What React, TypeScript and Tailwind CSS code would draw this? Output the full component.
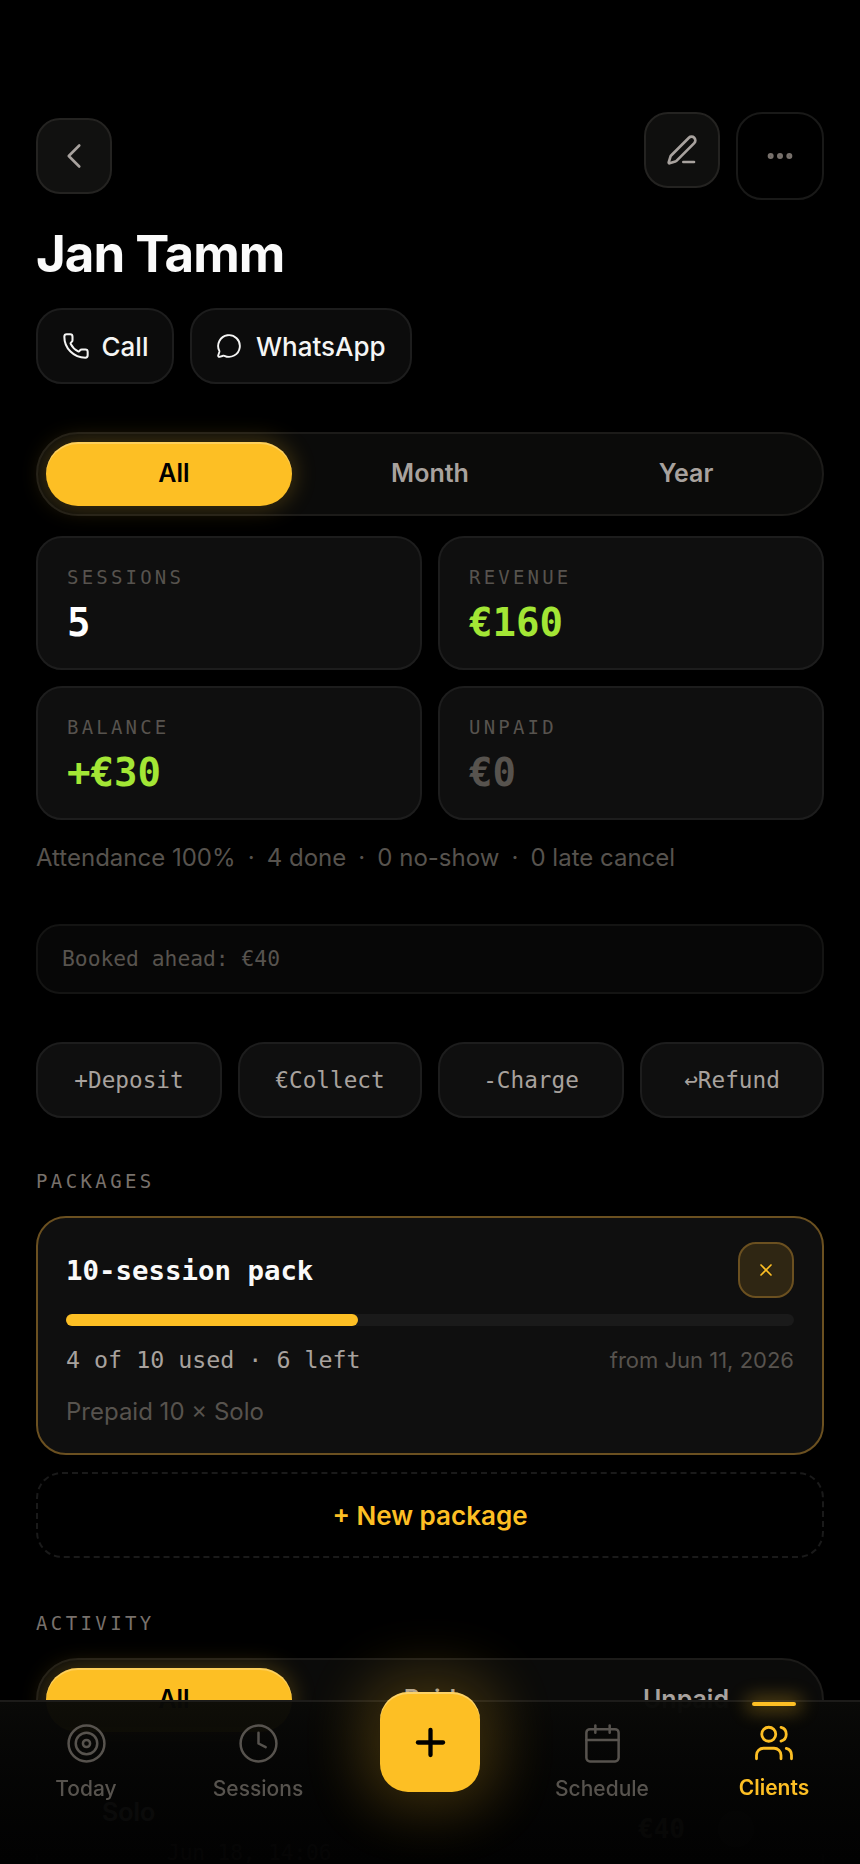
import { Calendar, ChevronLeft, Clock, Ellipsis, MessageCircle, PenLine, Phone, Plus, Target, Users, X } from 'lucide-react';

const mono = "font-['DejaVu_Sans_Mono',monospace]";

function Segments({ items }: { items: string[] }) {
  return (
    <div className="grid grid-cols-3 h-[84px] p-[8px] rounded-[42px] border-2 border-[#1c1b19] bg-[#0b0b0a]">
      {items.map((item, i) => (
        <div
          key={item}
          className={
            i === 0
              ? 'flex items-center justify-center rounded-[32px] mr-[10px] pl-[10px] bg-[#fdbf24] text-black text-[25px] font-semibold shadow-[0_0_24px_rgba(253,191,36,0.28),inset_0_2px_0_rgba(255,255,255,0.25)]'
              : 'flex items-center justify-center text-[#a8a29e] text-[25px] font-semibold'
          }
        >
          {item}
        </div>
      ))}
    </div>
  );
}

function Stat({ label, value, color }: { label: string; value: string; color: string }) {
  return (
    <div className="h-[134px] rounded-[26px] border-2 border-[#1d1d1d] bg-[#0f0f0f] px-[29px] pt-[26px]">
      <div className={`${mono} text-[19px] leading-[26px] tracking-[3.2px] text-[#57534e]`}>{label}</div>
      <div className={`${mono} ${color} text-[39px] leading-[48px] font-bold mt-[9px]`}>{value}</div>
    </div>
  );
}

function ActionButton({ label }: { label: string }) {
  return (
    <div className={`${mono} flex items-center justify-center h-[76px] rounded-[26px] border-2 border-[#1d1d1d] bg-[#0f0f0f] text-[22.7px] text-[#a8a29e]`}>
      {label}
    </div>
  );
}

function NavItem({ icon, label, active }: { icon: React.ReactNode; label: string; active?: boolean }) {
  return (
    <div className={`relative flex flex-col items-center pt-[20px] ${active ? 'text-[#fdbf24]' : 'text-[#57534e]'}`}>
      {active && <div className="absolute top-0 w-[44px] h-[4px] rounded-full bg-[#fdbf24] shadow-[0_0_18px_6px_rgba(253,191,36,0.3)]" />}
      {icon}
      <div className={`text-[21px] leading-[26px] mt-[11px] ${active ? 'font-semibold' : 'font-medium'}`}>{label}</div>
    </div>
  );
}

const attendance = ['Attendance 100%', '4 done', '0 no-show', '0 late cancel'];

export default function App() {
  return (
    <div className="relative h-[1864px] overflow-hidden bg-black font-['Inter',sans-serif]">
      <div className="px-[36px] pt-[112px]">
        <div className="flex items-start justify-between">
          <div className="mt-[6px] flex items-center justify-center w-[76px] h-[76px] rounded-[24px] border-2 border-[#242321] bg-[#111110] text-[#a8a29e]">
            <ChevronLeft size={42} strokeWidth={1.5} />
          </div>
          <div className="flex gap-[16px]">
            <div className="flex items-center justify-center w-[76px] h-[76px] rounded-[24px] border-2 border-[#242321] bg-[#0f0f0e] text-[#a8a29e]">
              <PenLine size={32} strokeWidth={2} />
            </div>
            <div className="flex items-center justify-center w-[88px] h-[88px] rounded-[26px] border-2 border-[#191918] bg-black text-[#78716c]">
              <Ellipsis size={32} strokeWidth={2.5} />
            </div>
          </div>
        </div>

        <h1 className="mt-[23px] text-[51px] leading-[62px] font-bold tracking-[-1px] text-[#fafafa]">Jan Tamm</h1>

        <div className="flex gap-[16px] mt-[23px]">
          <div className="flex items-center gap-[12px] h-[76px] px-[23.5px] rounded-[26px] border-2 border-[#1d1d1d] bg-[#0c0c0c] text-[26px] text-[#f5f5f4] font-medium">
            <Phone size={28} strokeWidth={1.75} />
            Call
          </div>
          <div className="flex items-center gap-[14px] h-[76px] px-[24px] rounded-[26px] border-2 border-[#1d1d1d] bg-[#0c0c0c] text-[26px] text-[#f5f5f4] font-medium">
            <MessageCircle size={26} strokeWidth={1.75} />
            WhatsApp
          </div>
        </div>

        <div className="mt-[48px]">
          <Segments items={['All', 'Month', 'Year']} />
        </div>

        <div className="grid grid-cols-2 gap-x-[16px] gap-y-[16px] mt-[20px]">
          <Stat label="SESSIONS" value="5" color="text-white" />
          <Stat label="REVENUE" value="€160" color="text-[#a3e635]" />
          <Stat label="BALANCE" value="+€30" color="text-[#a3e635]" />
          <Stat label="UNPAID" value="€0" color="text-[#57534e]" />
        </div>

        <div className="mt-[22px] text-[24px] leading-[32px] text-[#57534e] whitespace-pre">
          {attendance.map((part, i) => (
            <span key={part}>
              {i > 0 && <span className="mx-[-1.4px]">  ·  </span>}
              {part}
            </span>
          ))}
        </div>

        <div className={`${mono} flex items-center mt-[50px] h-[70px] px-[24px] rounded-[24px] border-2 border-[#141413] bg-[#070707] text-[21.3px] text-[#57534e]`}>
          Booked ahead: €40
        </div>

        <div className="grid grid-cols-[186px_184px_186px_184px] gap-[16px] mt-[48px]">
          <ActionButton label="+Deposit" />
          <ActionButton label="€Collect" />
          <ActionButton label="-Charge" />
          <ActionButton label="↩Refund" />
        </div>

        <div className={`${mono} mt-[50px] text-[19px] leading-[26px] tracking-[3.4px] text-[#78716c]`}>PACKAGES</div>

        <div className="mt-[22px] h-[239px] rounded-[30px] border-2 border-[#6b5020] bg-[#0f0f0f] px-[28px] pt-[24px]">
          <div className="flex items-center justify-between">
            <div className={`${mono} pt-[2px] text-[27.4px] font-semibold text-[#fafafa]`}>10-session pack</div>
            <div className="flex items-center justify-center w-[56px] h-[56px] rounded-[18px] border-2 border-[#6b5020] bg-[#2f2613] text-[#fdbf24]">
              <X size={20} strokeWidth={2} />
            </div>
          </div>
          <div className="h-[12px] mt-[16px] rounded-full bg-[#1a1a1a]">
            <div className="h-full w-[292px] rounded-full bg-[#fdbf24]" />
          </div>
          <div className="flex items-center justify-between mt-[19px]">
            <div className={`${mono} text-[23.3px] leading-[30px] text-[#a8a29e]`}>4 of 10 used · 6 left</div>
            <div className="text-[22px] leading-[30px] text-[#57534e]">from Jun 11, 2026</div>
          </div>
          <div className="mt-[22px] text-[24px] leading-[30px] text-[#57534e]">Prepaid 10 × Solo</div>
        </div>

        <div className="flex items-center justify-center mt-[17px] h-[86px] rounded-[26px] border-2 border-dashed border-[#1a1a1a] text-[26px] font-semibold text-[#fdbf24]">
          + New package
        </div>

        <div className={`${mono} mt-[52px] text-[19px] leading-[26px] tracking-[3.4px] text-[#78716c]`}>ACTIVITY</div>

        <div className="mt-[22px]">
          <Segments items={['All', 'Paid', 'Unpaid']} />
        </div>

        <div className="relative mt-[15px] h-[134px] rounded-[26px] border-2 border-[#1d1d1d] bg-[#0f0f0f] px-[64px] pt-[37px]">
          <div className="text-[25px] leading-[32px] font-semibold text-[#fafafa]">Solo</div>
          <div className={`${mono} mt-[12px] ml-[65px] text-[21px] leading-[27px] text-[#78716c]`}>Jun 18, 14:06</div>
          <div className={`${mono} absolute right-[137px] top-[54px] text-[26px] leading-[32px] font-semibold text-[#a8a29e]`}>€40</div>
          <div className="absolute right-[68px] top-[52px] w-[36px] h-[36px] rounded-full bg-[#3a3a3a]" />
        </div>
      </div>

      <div className="fixed bottom-0 left-0 right-0 h-[164px] border-t-2 border-[#1d1c1a] bg-linear-to-b from-[#0a0a08]/[0.98] to-[#020202]/[0.97] grid grid-cols-5">
        <NavItem icon={<Target size={43} strokeWidth={1.4} />} label="Today" />
        <NavItem icon={<Clock size={43} strokeWidth={1.4} />} label="Sessions" />
        <div className="flex justify-center">
          <div className="mt-[-10px] flex items-center justify-center w-[100px] h-[100px] rounded-[28px] bg-[#fdbf24] text-black shadow-[0_0_56px_20px_rgba(253,191,36,0.2),inset_0_2px_0_rgba(255,255,255,0.3)]">
            <Plus size={43} strokeWidth={2.4} />
          </div>
        </div>
        <NavItem icon={<Calendar size={43} strokeWidth={1.4} />} label="Schedule" />
        <NavItem icon={<Users size={42} strokeWidth={1.6} />} label="Clients" active />
      </div>
    </div>
  );
}
